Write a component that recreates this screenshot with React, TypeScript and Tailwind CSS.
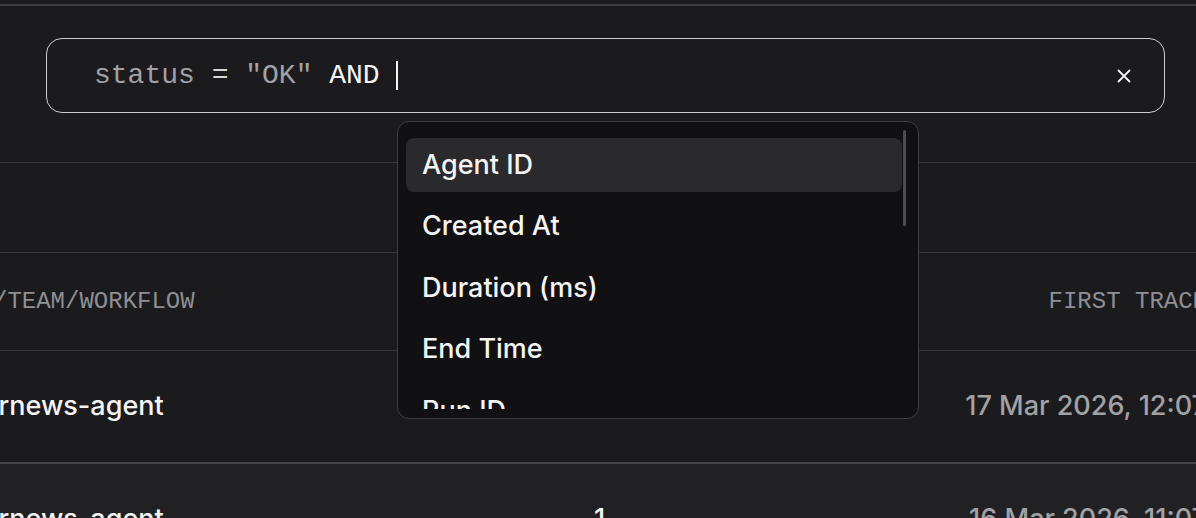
import React from "react";

const mono = { fontFamily: '"Liberation Mono", "DejaVu Sans Mono", monospace' };

function XIcon() {
  return (
    <svg width="14" height="14" viewBox="0 0 14 14" fill="none" stroke="#f2f2f2" strokeWidth="1.8" strokeLinecap="round">
      <path d="M1.5 1.5 L12.5 12.5 M12.5 1.5 L1.5 12.5" />
    </svg>
  );
}

const items = ["Agent ID", "Created At", "Duration (ms)", "End Time", "Run ID"];

export default function App() {
  return (
    <div
      className="relative w-[1196px] h-[518px] overflow-hidden bg-[#1b1b1d] text-white"
      style={{ fontFamily: 'Inter, "Noto Sans", sans-serif' }}
    >
      <div className="h-[4px]" />
      <div className="h-[2px] bg-[#3d3d40]" />

      {/* search */}
      <div className="pl-[46px] pr-[31px] pt-[32px]">
        <div className="flex h-[75px] items-center rounded-[16px] border-[1.5px] border-[#cdcdd0] pl-[47px] pr-[33px]">
          <div className="flex flex-1 items-center text-[28px] leading-none" style={mono}>
            <span className="text-[#a2a2a6] whitespace-pre">status </span>
            <span className="text-[#d8d8da] whitespace-pre">= </span>
            <span className="text-[#a2a2a6] whitespace-pre">"OK" </span>
            <span className="text-[#f4f4f5] whitespace-pre">AND </span>
            <span className="h-[29px] w-[2px] bg-[#f4f4f5]" />
          </div>
          <XIcon />
        </div>
      </div>

      {/* toolbar row */}
      <div className="mt-[49px] h-[90px] border-t border-[#38383b]" />

      {/* header row */}
      <div className="flex h-[98px] items-center border-t border-[#38383b] text-[24px] text-[#8f8f94]" style={mono}>
        <div className="-ml-[79px] w-[673px] shrink-0 whitespace-nowrap">AGENT/TEAM/WORKFLOW</div>
        <div className="w-[200px] shrink-0 whitespace-nowrap">TRACES</div>
        <div className="w-[413px] shrink-0 whitespace-nowrap text-right">FIRST TRACE</div>
      </div>

      {/* row 1 */}
      <div className="flex h-[112px] items-center border-t border-[#38383b] text-[27px] font-medium">
        <div className="-ml-[79px] w-[673px] shrink-0 whitespace-nowrap text-[#f4f4f5]">hackernews-agent</div>
        <div className="w-[200px] shrink-0 text-[#f4f4f5]">1</div>
        <div className="w-[413px] shrink-0 whitespace-nowrap text-right text-[#a1a1a6]">17 Mar 2026, 12:07</div>
      </div>

      {/* row 2 */}
      <div className="flex h-[112px] items-center border-t-2 border-[#444447] bg-[#212123] text-[27px] font-medium">
        <div className="-ml-[79px] w-[673px] shrink-0 whitespace-nowrap text-[#f4f4f5]">hackernews-agent</div>
        <div className="w-[200px] shrink-0 text-[#f4f4f5]">1</div>
        <div className="w-[413px] shrink-0 whitespace-nowrap text-right text-[#a1a1a6]">16 Mar 2026, 11:07</div>
      </div>

      {/* dropdown overlay */}
      <div className="absolute left-[397px] top-[121px] w-[522px] h-[298px] rounded-[12px] border-[1.5px] border-[#3f3f42] bg-[#111113] p-[8px]">
        <div className="flex h-[279px] overflow-hidden">
          <div className="flex w-[496px] shrink-0 flex-col gap-[7.5px] pt-[8px]">
            {items.map((it, i) => (
              <div
                key={it}
                className={
                  i === 0
                    ? "flex h-[54px] shrink-0 items-center rounded-[8px] bg-[#2a2a2d] pl-[16px] text-[27px] font-medium text-[#f4f4f5]"
                    : "flex h-[54px] shrink-0 items-center rounded-[8px] pl-[16px] text-[27px] font-medium text-[#f4f4f5]"
                }
              >
                {it}
              </div>
            ))}
          </div>
          <div className="ml-[1px] h-[96px] w-[3px] rounded-full bg-[#4d4d50]" />
        </div>
      </div>
    </div>
  );
}
